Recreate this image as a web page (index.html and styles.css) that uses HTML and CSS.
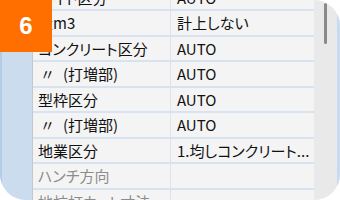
FILE: index.html
```html
<!DOCTYPE html>
<html lang="ja">
<head>
<meta charset="utf-8">
<link rel="stylesheet" href="styles.css">
</head>
<body>
<div class="frame">
  <div class="side"></div>
  <div class="grid">
    <div class="row"><div class="k">ボイド区分</div><div class="v">AUTO</div></div>
    <div class="row"><div class="k">量m3</div><div class="v">計上しない</div></div>
    <div class="row"><div class="k">コンクリート区分</div><div class="v">AUTO</div></div>
    <div class="row"><div class="k"><span class="ditto">〃</span>(打増部)</div><div class="v">AUTO</div></div>
    <div class="row"><div class="k">型枠区分</div><div class="v">AUTO</div></div>
    <div class="row"><div class="k"><span class="ditto">〃</span>(打増部)</div><div class="v">AUTO</div></div>
    <div class="row"><div class="k">地業区分</div><div class="v">1.均しコンクリート...</div></div>
    <div class="row"><div class="k dim">ハンチ方向</div><div class="v"></div></div>
    <div class="row"><div class="k dim">地杭打カット寸法</div><div class="v"></div></div>
  </div>
  <div class="scroll"><div class="thumb"></div></div>
  <div class="badge">6</div>
</div>
</body>
</html>
```
FILE: styles.css
```css
html, body {
  margin: 0;
  padding: 0;
  background: #ffffff;
}
.frame {
  position: relative;
  width: 340px;
  height: 200px;
  display: flex;
  overflow: hidden;
  border-radius: 0 26px 26px 26px;
  background: #f4f4f4;
  font-family: "Noto Sans CJK JP", "Liberation Sans", sans-serif;
  font-feature-settings: "palt";
  font-size: 15px;
  color: #111111;
}
.side {
  width: 30px;
  flex: none;
  background: #cbdcee;
  border-left: 2px solid #b4cbe6;
  border-right: 1px solid #c4c8cd;
}
.grid {
  flex: 1;
  display: flex;
  flex-direction: column;
  margin-top: -14.5px;
}
.row {
  display: flex;
  height: 23.5px;
  flex: none;
  border-bottom: 2px solid #d7e3f0;
}
.k, .v {
  display: flex;
  align-items: center;
  white-space: nowrap;
  overflow: hidden;
}
.k {
  width: 132px;
  padding-left: 5px;
  border-right: 1px solid #dce5ef;
}
.v {
  flex: 1;
  padding-left: 6px;
}
.ditto {
  margin-left: 2px;
  margin-right: 8px;
}
.dim {
  color: #8c8c8c;
}
.scroll {
  width: 23px;
  flex: none;
  background: #e9e9e9;
  border-right: 3px solid #c9dbf0;
  display: flex;
  justify-content: center;
  padding-top: 3px;
}
.thumb {
  width: 3px;
  height: 41px;
  border-radius: 2px;
  background: #8a8a8a;
}
.badge {
  position: absolute;
  left: 0;
  top: 0;
  width: 52px;
  height: 52px;
  background: #ff6f00;
  color: #ffffff;
  font-family: "Liberation Sans", sans-serif;
  font-weight: bold;
  font-size: 24px;
  display: flex;
  align-items: center;
  justify-content: center;
}
```
